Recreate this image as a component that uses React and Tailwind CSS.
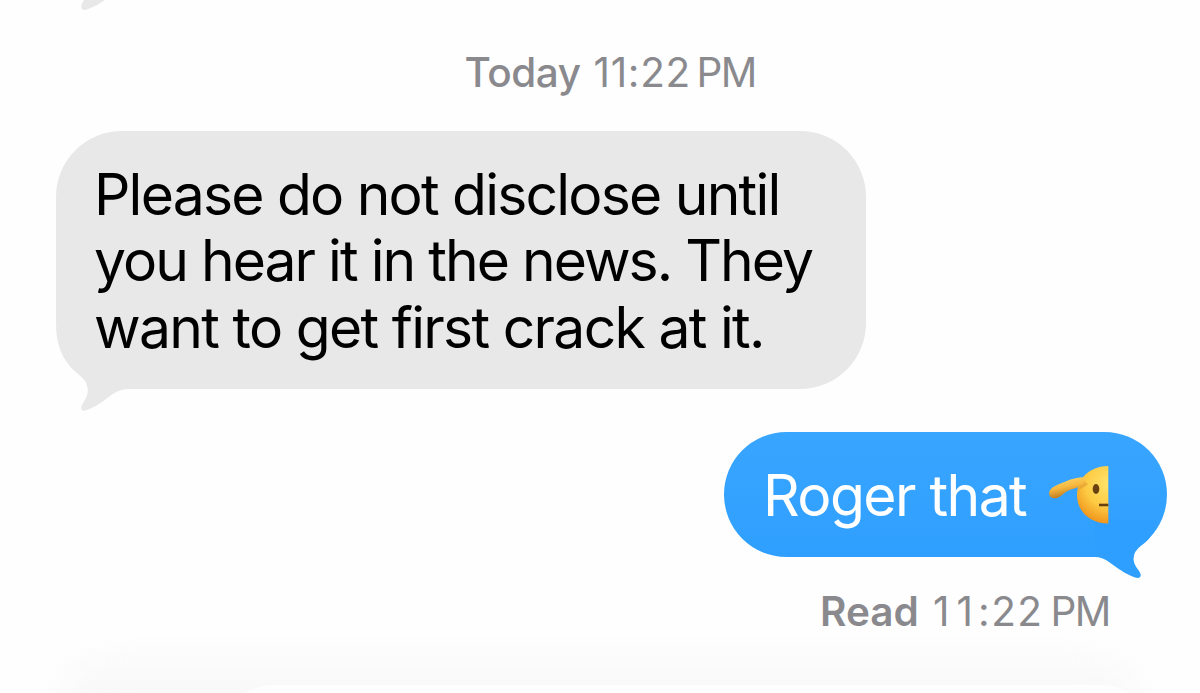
function ReceivedTail() {
  return (
    <svg className="absolute -bottom-[22px] left-0 h-[82px] w-[80px]" viewBox="56 328 80 82" fill="#e8e8e8">
      <path d="M56.3 328C57 346 63 357 71 366.5C77 373.5 87.5 377 87.8 389C88 397 82 402 81.2 406Q81 411.5 87 409C98 405 106 398 112 393.5Q119 388.5 128 388L128 328Z" />
    </svg>
  );
}

function SentTail() {
  return (
    <svg className="absolute -bottom-[22px] right-0 h-[62px] w-[80px]" viewBox="1087 517 80 62" fill="#2f9fff">
      <path d="M1156 521C1154 534 1149 540 1142 545Q1133.5 551 1133.5 559C1134 567 1140 570 1140.8 575Q1140.5 579 1135 577.5C1125 574 1116 567 1109 562Q1102 557 1095 557L1095 519Z" />
    </svg>
  );
}

function SaluteEmoji() {
  return (
    <svg className="ml-[20px] h-[62px] w-[64px]" viewBox="1046 464.5 64 62" role="img" aria-label="Saluting face">
      <defs>
        <radialGradient id="face" gradientUnits="userSpaceOnUse" cx="1109" cy="484" r="43">
          <stop offset="0" stopColor="#ffe46c" />
          <stop offset="0.55" stopColor="#fdca43" />
          <stop offset="1" stopColor="#ee8c14" />
        </radialGradient>
        <linearGradient id="hand" x1="0" y1="0" x2="0.35" y2="1">
          <stop offset="0" stopColor="#ffdf72" />
          <stop offset="0.55" stopColor="#f6b83f" />
          <stop offset="1" stopColor="#b97619" />
        </linearGradient>
      </defs>
      <path d="M1108.3 466.5C1090 466.5 1077 479 1077 495.5S1090 524 1108.3 524Z" fill="url(#face)" />
      <path d="M1078 491Q1080 485 1085 482L1088 485Q1083 488 1078 491Z" fill="#dc9130" opacity=".5" />
      <path d="M1086 478C1077 476.5 1068 481 1058 485Q1049 489 1049 494Q1050 500 1057 498.5C1062 497 1064 492 1071 490C1078 488 1083 486 1085 482Z" fill="url(#hand)" />
      <ellipse cx="1096" cy="489.5" rx="3.3" ry="5" fill="#69400f" />
      <path d="M1099 505.5H1108.3" stroke="#69400f" strokeWidth="2.6" strokeLinecap="butt" />
    </svg>
  );
}

export default function App() {
  return (
    <main className="relative flex h-[693px] w-[1200px] flex-col overflow-hidden bg-[#fefefe] font-['Inter','Liberation_Sans',sans-serif]">
      <svg className="absolute left-[80px] top-0 h-[12px] w-[30px]" viewBox="0 0 30 12" fill="#e8e8e8">
        <path d="M4 0Q1 4 1.2 7Q2 11 7 9.5Q17 6 25 0Z" />
      </svg>
      <div className="absolute -bottom-[65px] left-[60px] h-[100px] w-[1080px] rounded-[50px] bg-[#f9f9f9] blur-[14px]" />
      <div className="absolute -bottom-[112px] left-[215px] h-[120px] w-[945px] rounded-[60px] bg-[#fefefe]" />

      <header className="relative mt-[48px] flex h-[50px] shrink-0 items-center whitespace-nowrap pl-[464.5px] text-[40.5px] leading-[50px] text-[#8a8a8e]">
        <span className="w-[129px] font-medium tracking-[-0.5px]">Today</span>
        <span className="w-[103px] tracking-[0.7px]">11:22</span>
        <span className="tracking-[-1.5px]">PM</span>
      </header>

      <section className="relative ml-[56px] mt-[33px] flex h-[257.5px] w-[809.5px] shrink-0 flex-col whitespace-nowrap rounded-[66px] bg-[#e8e8e8] pl-[38px] pt-[30.5px] text-[57px] leading-[66.7px] text-black">
        <ReceivedTail />
        <span className="relative tracking-[-1.78px]">Please do not disclose until</span>
        <span className="relative tracking-[-1.97px]">you hear it in the news. They</span>
        <span className="relative tracking-[-1.7px]">want to get first crack at it.</span>
      </section>

      <section className="relative ml-[724px] mt-[43.5px] flex h-[125px] w-[443px] shrink-0 items-center whitespace-nowrap rounded-[66px] bg-linear-to-b from-[#38a5ff] to-[#2f9fff] pl-[39px] text-[57px] leading-[66px] text-white">
        <SentTail />
        <span className="relative top-[1px] w-[263px] tracking-[-1.55px]">Roger that</span>
        <div className="relative flex"><SaluteEmoji /></div>
      </section>

      <footer className="relative mt-[30px] flex h-[50px] shrink-0 items-center whitespace-nowrap pl-[820px] text-[40.5px] leading-[50px] text-[#8a8a8e]">
        <span className="w-[113px] font-semibold tracking-[0px]">Read</span>
        <span className="w-[117.5px]"><span className="tracking-[7px]">1</span><span className="tracking-[5px]">1</span><span className="tracking-[1.5px]">:22</span></span>
        <span className="tracking-[-1.5px]">PM</span>
      </footer>
    </main>
  );
}
